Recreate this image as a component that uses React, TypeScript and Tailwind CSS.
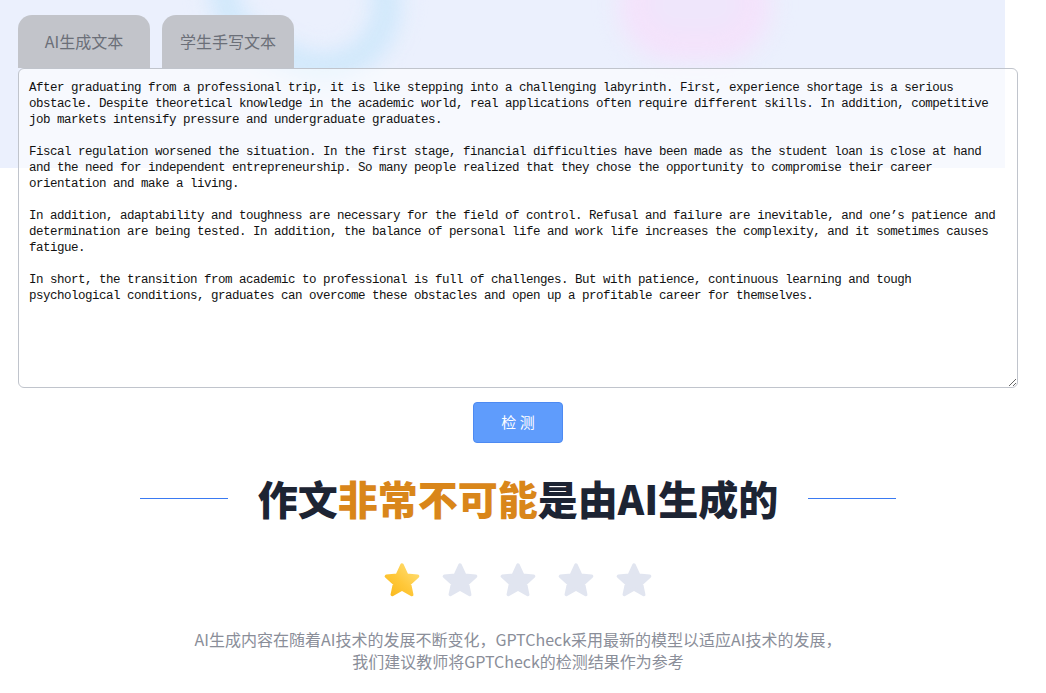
import React from "react";

const essay = [
  "After graduating from a professional trip, it is like stepping into a challenging labyrinth. First, experience shortage is a serious",
  "obstacle. Despite theoretical knowledge in the academic world, real applications often require different skills. In addition, competitive",
  "job markets intensify pressure and undergraduate graduates.",
  "",
  "Fiscal regulation worsened the situation. In the first stage, financial difficulties have been made as the student loan is close at hand",
  "and the need for independent entrepreneurship. So many people realized that they chose the opportunity to compromise their career",
  "orientation and make a living.",
  "",
  "In addition, adaptability and toughness are necessary for the field of control. Refusal and failure are inevitable, and one\u2019s patience and",
  "determination are being tested. In addition, the balance of personal life and work life increases the complexity, and it sometimes causes",
  "fatigue.",
  "",
  "In short, the transition from academic to professional is full of challenges. But with patience, continuous learning and tough",
  "psychological conditions, graduates can overcome these obstacles and open up a profitable career for themselves.",
].join("\n");

function Star({ active, id }: { active: boolean; id: string }) {
  const pts = "20,4 24.7,14.2 35.6,15.3 27.4,22.7 29.7,33.5 20,28 10.3,33.5 12.6,22.7 4.4,15.3 15.3,14.2";
  return (
    <svg width="40" height="40" viewBox="0 0 40 40">
      {active ? (
        <defs>
          <linearGradient id={id} x1="1" y1="0" x2="0" y2="1">
            <stop offset="0%" stopColor="#ffe07a" />
            <stop offset="55%" stopColor="#ffc83a" />
            <stop offset="100%" stopColor="#f9b81c" />
          </linearGradient>
        </defs>
      ) : null}
      <polygon
        points={pts}
        fill={active ? `url(#${id})` : "#e1e5f0"}
        stroke={active ? `url(#${id})` : "#e1e5f0"}
        strokeWidth={3.5}
        strokeLinejoin="round"
      />
    </svg>
  );
}

export default function App() {
  return (
    <div
      className="relative h-[693px] w-full overflow-hidden bg-white"
      style={{ fontFamily: '"Noto Sans CJK SC", "Noto Sans", sans-serif' }}
    >
      {/* decorative header backdrop */}
      <div className="absolute left-0 top-0 h-[168px] w-[1005px] overflow-hidden bg-[#ebf0fd]">
        <div className="absolute -top-[80px] left-[210px] h-[150px] w-[190px] rotate-[25deg] rounded-full border-[22px] border-[#c8e6fb] blur-[12px]" />
        <div className="absolute -top-[50px] left-[620px] h-[110px] w-[150px] rounded-full border-[26px] border-[#f5e1fb] bg-[#efe6fb] blur-[12px]" />
      </div>

      <div className="relative px-[18px] pt-[15px]">
        <div className="flex gap-3">
          <div className="flex h-[53px] w-[132px] items-center justify-center rounded-t-[14px] bg-[#c2c4ca] pb-[2px] text-[16px] text-[#6b6f78]">
            AI生成文本
          </div>
          <div className="flex h-[53px] w-[132px] items-center justify-center rounded-t-[14px] bg-[#c2c4ca] pb-[2px] text-[16px] text-[#6b6f78]">
            学生手写文本
          </div>
        </div>

        <textarea
          readOnly
          wrap="off"
          defaultValue={essay}
          className="block h-[320px] w-[1000px] resize-y overflow-hidden rounded-md border border-[#c0c4cc] bg-white/60 px-[10px] pt-[11px] text-[12.5px] leading-[16px] tracking-[-0.5px] text-[#111] outline-none"
          style={{ fontFamily: '"Liberation Mono", "Noto Sans CJK SC", monospace' }}
        />

        <div className="flex w-[1000px] flex-col items-center">
          <button
            type="button"
            className="mt-[14px] flex h-[41px] w-[90px] items-center justify-center rounded-[4px] border border-[#4d8af2] bg-[#5f9cfc] text-[15px] text-white"
          >
            检 测
          </button>

          <div className="mt-[27px] flex h-[56px] items-center gap-[30px]">
            <div className="h-px w-[88px] bg-[#3a7af2]" />
            <h2 className="text-[40px] font-extrabold leading-[56px] text-[#1d2433]">
              作文<span className="text-[#d9861a]">非常不可能</span>是由AI生成的
            </h2>
            <div className="h-px w-[88px] bg-[#3a7af2]" />
          </div>

          <div className="mt-[35px] flex gap-[18px]">
            {[0, 1, 2, 3, 4].map((i) => (
              <Star key={i} active={i === 0} id={`star-${i}`} />
            ))}
          </div>

          <p className="mt-[27px] text-center text-[16px] leading-[22px] text-[#8a8e99]">
            AI生成内容在随着AI技术的发展不断变化，GPTCheck采用最新的模型以适应AI技术的发展，
            <br />
            我们建议教师将GPTCheck的检测结果作为参考
          </p>
        </div>
      </div>
    </div>
  );
}
